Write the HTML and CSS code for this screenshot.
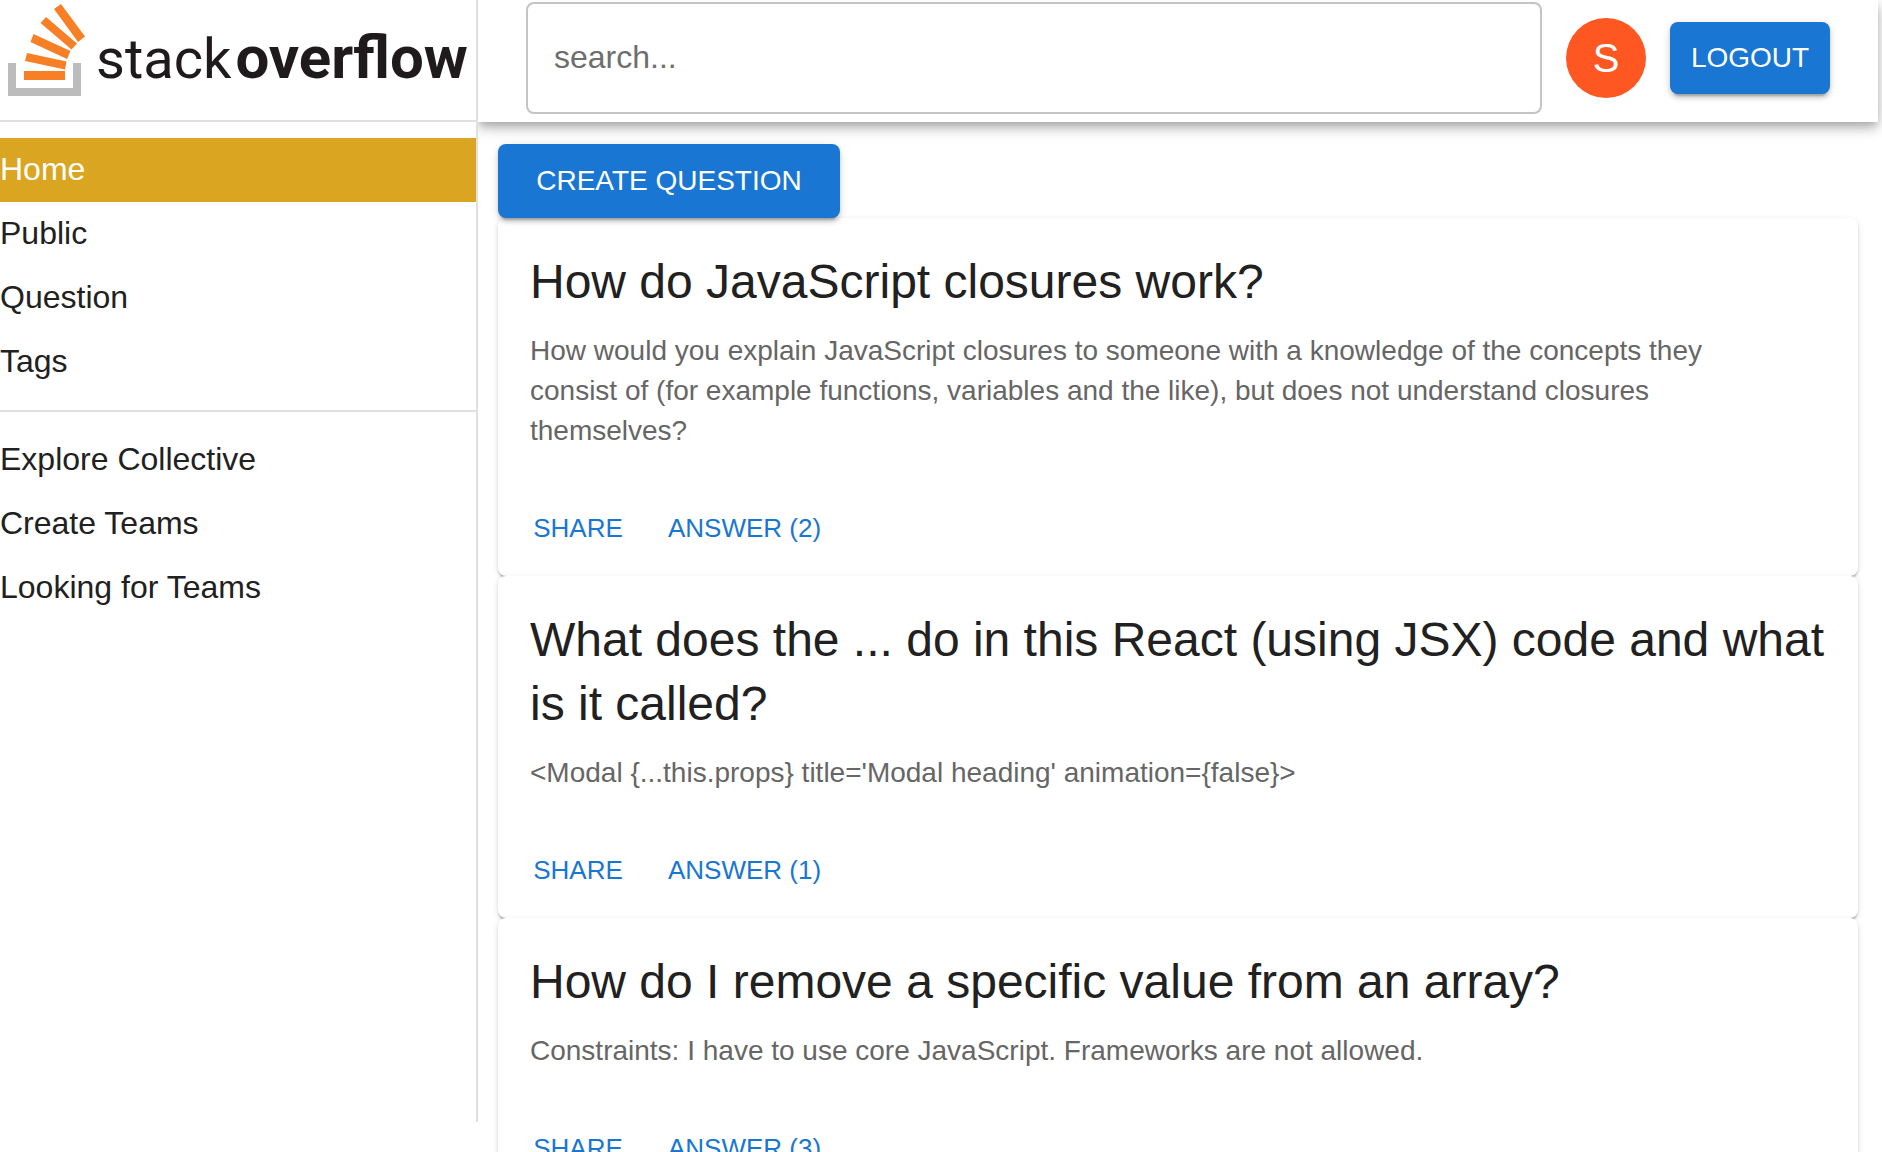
FILE: index.html
```html
<!DOCTYPE html>
<html lang="en">
<head>
<meta charset="utf-8">
<title>Stack Overflow</title>
<link rel="stylesheet" href="styles.css">
</head>
<body>
<div class="app">
  <aside class="sidebar">
    <a class="logo" href="#" aria-label="stack overflow">
      <svg class="logo-mark" viewBox="0 0 86 98" width="86" height="98" aria-hidden="true">
        <path fill="#bcbcbc" d="M8 63h8v25h57V63h8v33H8z"/>
        <path fill="#f78026" d="M24 71h41v9H24zM27 53l39.500 8.500L65 69.500 25 61zM33.500 34L70.500 51 67 59 30.500 42zM46 17l31 26.500L71.500 49.500 40.500 23zM61 4l24 32.500L78 42 54 9z"/>
      </svg>
      <span class="logo-text">stack<b class="logo-bold">overflow</b></span>
    </a>
    <nav>
      <ul class="nav-list">
        <li><a class="nav-link active" href="#">Home</a></li>
        <li><a class="nav-link" href="#">Public</a></li>
        <li><a class="nav-link" href="#">Question</a></li>
        <li><a class="nav-link" href="#">Tags</a></li>
      </ul>
      <ul class="nav-list divided">
        <li><a class="nav-link" href="#">Explore Collective</a></li>
        <li><a class="nav-link" href="#">Create Teams</a></li>
        <li><a class="nav-link" href="#">Looking for Teams</a></li>
      </ul>
    </nav>
  </aside>
  <div class="content">
    <header class="topbar">
      <input class="search" type="search" placeholder="search..." aria-label="Search">
      <span class="avatar">S</span>
      <button class="button logout" type="button">LOGOUT</button>
    </header>
    <main class="main">
      <button class="button create" type="button">CREATE QUESTION</button>
      <article class="card">
        <div class="card-body">
          <h2 class="card-title">How do JavaScript closures work?</h2>
          <p class="card-text">How would you explain JavaScript closures to someone with a knowledge of the concepts they consist of (for example functions, variables and the like), but does not understand closures themselves?</p>
        </div>
        <div class="card-actions">
          <button class="text-button" type="button">SHARE</button>
          <button class="text-button" type="button">ANSWER (2)</button>
        </div>
      </article>
      <article class="card">
        <div class="card-body">
          <h2 class="card-title">What does the ... do in this React (using JSX) code and what is it called?</h2>
          <p class="card-text">&lt;Modal {...this.props} title='Modal heading' animation={false}&gt;</p>
        </div>
        <div class="card-actions">
          <button class="text-button" type="button">SHARE</button>
          <button class="text-button" type="button">ANSWER (1)</button>
        </div>
      </article>
      <article class="card">
        <div class="card-body">
          <h2 class="card-title">How do I remove a specific value from an array?</h2>
          <p class="card-text">Constraints: I have to use core JavaScript. Frameworks are not allowed.</p>
        </div>
        <div class="card-actions">
          <button class="text-button" type="button">SHARE</button>
          <button class="text-button" type="button">ANSWER (3)</button>
        </div>
      </article>
    </main>
  </div>
</div>
</body>
</html>
```

FILE: styles.css
```css
* {
  box-sizing: border-box;
}

body {
  margin: 0;
  background: #fff;
  color: #212121;
  font-family: "Liberation Sans", Arial, sans-serif;
  font-size: 32px;
  line-height: 48px;
}

button,
input {
  font-family: inherit;
}

.app {
  display: flex;
  align-items: flex-start;
  height: 100vh;
  overflow: hidden;
}

.sidebar {
  position: relative;
  z-index: 2;
  flex: 0 0 478px;
  min-height: calc(100vh - 30px);
  border-right: 2px solid #e0e0e0;
  background: #fff;
}

.logo {
  display: flex;
  align-items: flex-start;
  gap: 10px;
  height: 122px;
  border-bottom: 2px solid #e0e0e0;
  color: #1f1b1c;
  text-decoration: none;
}

.logo-mark {
  flex: none;
}

.logo-text {
  display: flex;
  align-items: baseline;
  gap: 4px;
  padding-top: 18px;
  font-family: Roboto, sans-serif;
  font-size: 56px;
  line-height: 80px;
}

.logo-bold {
  font-size: 60px;
  font-weight: 700;
}

.nav-list {
  margin: 0;
  padding: 16px 0;
  list-style: none;
}

.divided {
  border-top: 2px solid #e0e0e0;
}

.nav-link {
  display: block;
  padding: 7px 0 9px;
  color: #212121;
  text-decoration: none;
}

.nav-link.active {
  background: #daa520;
  color: #fff;
}

.content {
  flex: 1;
  min-width: 0;
}

.topbar {
  position: relative;
  z-index: 1;
  display: flex;
  align-items: center;
  gap: 24px;
  margin-right: 4px;
  padding: 2px 48px 8px;
  background: #fff;
  box-shadow: 0 4px 8px -2px rgba(0, 0, 0, 0.2), 0 8px 10px 0 rgba(0, 0, 0, 0.14), 0 2px 20px 0 rgba(0, 0, 0, 0.12);
}

.search {
  flex: 1;
  min-width: 0;
  height: 112px;
  padding: 0 26px 2px;
  border: 2px solid #c4c4c4;
  border-radius: 8px;
  background: #fff;
  color: #212121;
  font-size: 32px;
  appearance: none;
}

.search::placeholder {
  color: #6e6e6e;
}

.avatar {
  display: flex;
  flex: none;
  align-items: center;
  justify-content: center;
  width: 80px;
  height: 80px;
  border-radius: 50%;
  background: #ff5722;
  color: #fff;
  font-size: 40px;
}

.button {
  border: 0;
  border-radius: 8px;
  background: #1976d2;
  color: #fff;
  font-size: 28px;
  line-height: 48px;
  box-shadow: 0 6px 2px -4px rgba(0, 0, 0, 0.2), 0 4px 4px 0 rgba(0, 0, 0, 0.14), 0 2px 10px 0 rgba(0, 0, 0, 0.12);
}

.logout {
  min-width: 160px;
  padding: 12px 16px;
}

.main {
  padding: 22px 24px 0 20px;
}

.create {
  position: relative;
  display: block;
  min-width: 342px;
  padding: 13px 32px;
}

.card {
  border-radius: 8px;
  background: #fff;
  box-shadow: 0 4px 2px -2px rgba(0, 0, 0, 0.2), 0 2px 2px 0 rgba(0, 0, 0, 0.14), 0 2px 6px 0 rgba(0, 0, 0, 0.12);
}

.card-body {
  padding: 32px;
}

.card-title {
  margin: 0 0 17px;
  font-size: 48px;
  font-weight: 400;
  line-height: 64px;
}

.card-text {
  margin: 0;
  padding-right: 48px;
  color: #666;
  font-size: 28px;
  line-height: 40px;
}

.card-actions {
  display: flex;
  gap: 16px;
  padding: 16px;
}

.text-button {
  min-width: 128px;
  padding: 7px 10px 9px;
  border: 0;
  background: none;
  color: #1976d2;
  font-size: 26px;
  line-height: 45px;
}
```
